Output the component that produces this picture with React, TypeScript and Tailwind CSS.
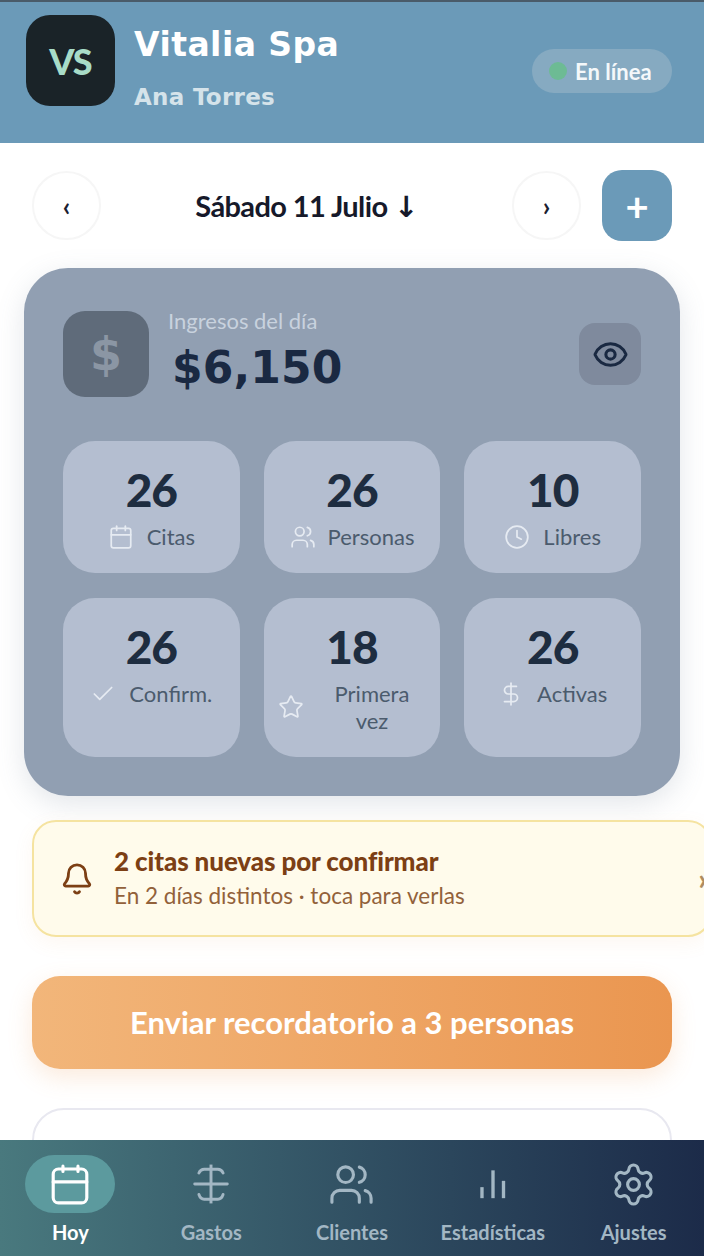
import React from "react";
import { Calendar, Users, Clock, Check, Star, DollarSign, Eye, Bell, Settings } from "lucide-react";

const Gastos = ({ className }: { className?: string }) => (
  <svg viewBox="0 0 40 40" fill="none" stroke="currentColor" strokeWidth="2.8" strokeLinecap="round" strokeLinejoin="round" className={className}>
    <path d="M20 1.500v37" strokeLinecap="butt" />
    <path d="M4.500 20h31" />
    <path d="M8.500 9.500Q10 6 13.500 6H26.500Q30 6 31.500 9.500" />
    <path d="M8.500 30Q10 34.500 13.500 34.500H26.500Q30 34.500 31.500 30" />
  </svg>
);

const Bars = ({ className }: { className?: string }) => (
  <svg viewBox="0 0 40 40" fill="none" stroke="currentColor" strokeWidth="3.2" className={className}>
    <path d="M9.500 23v10.500" />
    <path d="M20 7v26.500" />
    <path d="M30 17v16.500" />
  </svg>
);

const CalNav = ({ className }: { className?: string }) => (
  <svg viewBox="0 0 40 40" fill="none" stroke="currentColor" strokeWidth="3" strokeLinecap="round" strokeLinejoin="round" className={className}>
    <rect x="4" y="5.700" width="32" height="32.300" rx="5" />
    <path d="M13.300 3v5M27.600 3v5M4 18h32" />
  </svg>
);

const stats = [
  { n: "26", l: "Citas", I: Calendar, gap: "gap-[13px]" },
  { n: "26", l: "Personas", I: Users, gap: "gap-[12px]" },
  { n: "10", l: "Libres", I: Clock, gap: "gap-[13px]" },
];
const stats2 = [
  { n: "26", l: "Confirm.", I: Check, gap: "gap-[13px]" },
  { n: "18", l: "Primera vez", I: Star, gap: "gap-[14px]" },
  { n: "26", l: "Activas", I: DollarSign, gap: "gap-[13px]" },
];

const Stat = ({ s, h }: { s: (typeof stats)[number]; h: string }) => (
  <div className={`${h} rounded-[32px] bg-[#b4bed0] flex flex-col items-center pt-[23px] px-[14px]`}>
    <div className="font-black text-[46px] leading-[52px] tracking-[-1px] text-[#1e2d40]">{s.n}</div>
    <div className={`mt-[7px] flex items-center ${s.gap}`}>
      <s.I className="w-[26px] h-[26px] text-[#e6ebf2] shrink-0" strokeWidth={1.6} />
      <span className="text-[22px] leading-[27px] text-[#4b5b6d] text-center">{s.l}</span>
    </div>
  </div>
);

const nav = [
  { l: "Hoy", I: CalNav, active: true, size: "w-[42px] h-[42px]" },
  { l: "Gastos", I: Gastos, size: "w-[42px] h-[42px]" },
  { l: "Clientes", I: Users, size: "w-[47px] h-[47px]" },
  { l: "Estadísticas", I: Bars, size: "w-[42px] h-[42px]" },
  { l: "Ajustes", I: Settings, size: "w-[47px] h-[47px]" },
];

export default function App() {
  return (
    <div className="h-[1256px] w-[704px] overflow-hidden flex flex-col bg-white font-['Lato','Liberation_Sans',sans-serif]">
      <header className="h-[143px] shrink-0 bg-[#6b9ab8] border-t-2 border-[#4a5b69] pl-[26px] pr-[32px] flex items-start">
        <div className="mt-[13px] w-[89px] h-[91px] rounded-[24px] bg-[#1a2328] flex items-center justify-center font-black text-[36px] tracking-[-1px] text-[#a8dcc8]">VS</div>
        <div className="ml-[19px] flex-1 font-['DejaVu_Sans',sans-serif] font-bold">
          <div className="mt-[21px] text-[33px] leading-[44px] tracking-[0.45px] text-white">Vitalia Spa</div>
          <div className="mt-[15px] text-[23px] leading-[30px] tracking-[0.3px] text-[#d5e3ea]">Ana Torres</div>
        </div>
        <div className="mt-[47px] h-[44px] w-[140px] rounded-full bg-[#86aac1] flex items-center pl-[17px] gap-[8px]">
          <span className="w-[18px] h-[18px] rounded-full bg-[#6dbb94]" />
          <span className="font-bold text-[22px] text-[#f4f8fa]">En línea</span>
        </div>
      </header>

      <main className="flex-1 overflow-hidden min-h-0">
        <div className="mt-[27px] pl-[32px] pr-[32px] flex items-center h-[71px]">
          <button className="w-[69px] h-[69px] rounded-full border-2 border-[#f6f6f6] bg-white text-[26px] pt-[2px] text-[#1a2030] font-bold">‹</button>
          <div className="flex-1 text-center text-[29px] leading-[36px] font-bold text-[#16192a] tracking-[-0.6px]">
            Sábado 11 Julio <span className="font-['DejaVu_Sans',sans-serif] text-[29px] leading-none font-bold">↓</span>
          </div>
          <button className="w-[69px] h-[69px] rounded-full border-2 border-[#f6f6f6] bg-white text-[26px] pt-[2px] text-[#1a2030] font-bold">›</button>
          <button className="ml-[21px] w-[70px] h-[71px] rounded-[20px] bg-[#6b9ab8] text-white text-[40px] font-bold leading-none">+</button>
        </div>

        <section className="mt-[27px] mx-[24px] h-[528px] rounded-[44px] bg-[#919fb2] px-[39px] pt-[43px] shadow-[0_8px_28px_rgba(100,116,139,0.18)]">
          <div className="flex items-start h-[86px]">
            <div className="w-[86px] h-[86px] rounded-[22px] bg-[#5f6b7a] flex items-center justify-center font-['DejaVu_Sans',sans-serif] font-bold text-[46px] text-[#8b96a4]">$</div>
            <div className="ml-[19px] flex-1">
              <div className="-mt-[2px] text-[22px] leading-[24px] text-[#c8d2de]">Ingresos del día</div>
              <div className="mt-[9px] ml-[4px] font-['DejaVu_Sans',sans-serif] font-bold text-[44px] leading-[52px] tracking-[0.1px] text-[#1a2942]">$6,150</div>
            </div>
            <div className="mt-[12px] w-[62px] h-[62px] rounded-[16px] bg-[#7f8a9d] flex items-center justify-center">
              <Eye className="w-[37px] h-[37px] text-[#1a2942]" strokeWidth={2} />
            </div>
          </div>
          <div className="mt-[44px] grid grid-cols-3 gap-x-[24px] gap-y-[25px]">
            {stats.map((s) => <Stat key={s.l} s={s} h="h-[132px]" />)}
            {stats2.map((s) => <Stat key={s.l} s={s} h="h-[159px]" />)}
          </div>
        </section>

        <div className="mt-[24px] ml-[32px] w-[680px] h-[117px] rounded-[24px] border-2 border-[#f5e3a0] bg-[#fffbeb] pl-[26px] pr-[3px] flex items-center shadow-[0_6px_20px_rgba(234,150,80,0.08)]">
          <Bell className="w-[34px] h-[34px] text-[#7c3f14] shrink-0" strokeWidth={2} />
          <div className="ml-[20px] flex-1">
            <div className="-mt-[3px] font-black text-[26px] leading-[32px] tracking-[-0.1px] text-[#7c3f14]">2 citas nuevas por confirmar</div>
            <div className="mt-[5px] text-[22.500px] leading-[28px] text-[#92613a]">En 2 días distintos · toca para verlas</div>
          </div>
          <span className="text-[30px] font-black text-[#b08d60]">›</span>
        </div>

        <button className="mt-[39px] ml-[32px] block w-[640px] h-[93px] rounded-[28px] bg-gradient-to-r from-[#f2b67a] to-[#ea9650] text-white font-bold text-[31px] shadow-[0_8px_24px_rgba(234,150,80,0.2)]">Enviar recordatorio a 3 personas</button>

        <div className="mt-[39px] ml-[32px] w-[640px] h-[120px] rounded-[32px] border-[2px] border-[#e8e8f0] bg-white" />
      </main>

      <nav className="h-[116px] shrink-0 bg-gradient-to-r from-[#49797e] to-[#1c2b49] flex">
        {nav.map((n) => (
          <div key={n.l} className="flex-1 flex flex-col items-center pt-[15px]">
            <div className={`w-[90px] h-[58px] rounded-full flex items-center justify-center ${n.active ? "bg-[#5c9a9e]" : ""}`}>
              <n.I className={`${n.size} ${n.active ? "text-white" : "text-[#a3b7c4]"}`} strokeWidth={1.6} />
            </div>
            <div className={`mt-[6px] text-[20px] leading-[26px] font-bold ${n.active ? "text-white" : "text-[#a3b7c4]"}`}>{n.l}</div>
          </div>
        ))}
      </nav>
    </div>
  );
}
